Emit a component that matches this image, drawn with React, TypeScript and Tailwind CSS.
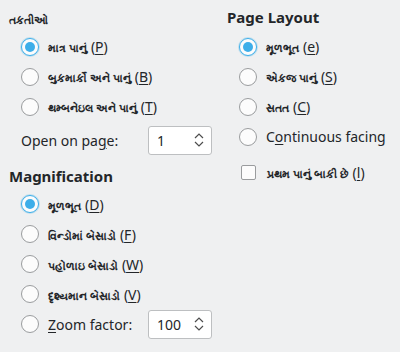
const FONT = { fontFamily: '"Noto Sans", "Liberation Sans", sans-serif' }

function Mnemonic({ label, k }: { label: string; k: string }) {
  return (
    <span className="flex items-baseline">
      <span className="text-[11px] font-semibold">{label}</span>
      <span className="ml-[4px] text-[14px]">
        (<span className="underline underline-offset-2">{k}</span>)
      </span>
    </span>
  )
}

function Radio({ checked }: { checked?: boolean }) {
  return (
    <span
      className={
        'flex h-[18px] w-[18px] shrink-0 items-center justify-center rounded-full border bg-[#fcfcfc] ' +
        (checked ? 'border-[#3daee9] shadow-[0_0_0_1px_rgba(61,174,233,0.25)]' : 'border-[#9a9c9e]')
      }
    >
      {checked && <span className="h-[10px] w-[10px] rounded-full bg-[#3daee9]" />}
    </span>
  )
}

function GuRow({ label, k, checked }: { label: string; k: string; checked?: boolean }) {
  return (
    <div className="flex h-[30px] items-center gap-[9px]">
      <Radio checked={checked} />
      <Mnemonic label={label} k={k} />
    </div>
  )
}

function SpinBox({ value }: { value: string }) {
  return (
    <div className="flex h-[29px] w-[64px] items-center justify-between rounded-[3px] border border-[#bdbfc1] bg-white pl-[8px] pr-[6px] text-[14px]">
      <span>{value}</span>
      <svg width="12" height="18" viewBox="0 0 12 18" fill="none" stroke="#4d4d4d" strokeWidth="1.2">
        <path d="M2 7 L6 3 L10 7" />
        <path d="M2 11 L6 15 L10 11" />
      </svg>
    </div>
  )
}

export default function App() {
  return (
    <div style={FONT} className="flex h-[352px] w-[400px] bg-[#eff0f1] text-[#232629]">
      <div className="flex w-[227px] flex-col pl-[9px] pt-[12px]">
        <div className="mb-[3px] text-[11px] font-bold">તકતીઓ</div>
        <div className="flex flex-col pl-[12px]">
          <GuRow label="માત્ર પાનું" k="P" checked />
          <GuRow label="બુકમાર્કો અને પાનું" k="B" />
          <GuRow label="થમ્બનેઇલ અને પાનું" k="T" />
        </div>
        <div className="mt-[4px] flex items-center pl-[12px]">
          <span className="w-[127px] text-[14px]">
            Open on pa<span className="underline underline-offset-2">g</span>e:
          </span>
          <SpinBox value="1" />
        </div>
        <div className="mt-[10px] mb-[2px] text-[15px] font-bold">Magnification</div>
        <div className="flex flex-col pl-[12px]">
          <GuRow label="મૂળભૂત" k="D" checked />
          <GuRow label="વિન્ડોમાં બેસાડો" k="F" />
          <GuRow label="પહોળાઇ બેસાડો" k="W" />
          <GuRow label="દૃશ્યમાન બેસાડો" k="V" />
          <div className="flex h-[30px] items-center">
            <div className="flex w-[127px] items-center gap-[9px]">
              <Radio />
              <span className="text-[14px]">
                <span className="underline underline-offset-2">Z</span>oom factor:
              </span>
            </div>
            <SpinBox value="100" />
          </div>
        </div>
      </div>
      <div className="flex flex-col pt-[6px]">
        <div className="mb-[3px] text-[15px] font-bold">Page Layout</div>
        <div className="flex flex-col pl-[12px]">
          <GuRow label="મૂળભૂત" k="e" checked />
          <GuRow label="એકજ પાનું" k="S" />
          <GuRow label="સતત" k="C" />
          <div className="flex h-[30px] items-center gap-[9px]">
            <Radio />
            <span className="text-[14px]">
              C<span className="underline underline-offset-2">o</span>ntinuous facing
            </span>
          </div>
          <div className="mt-[6px] flex h-[30px] items-center gap-[11px] pl-[2px]">
            <span className="h-[15px] w-[15px] rounded-[2px] border border-[#9a9c9e] bg-[#fcfcfc]" />
            <Mnemonic label="પ્રથમ પાનું બાકી છે" k="l" />
          </div>
        </div>
      </div>
    </div>
  )
}
